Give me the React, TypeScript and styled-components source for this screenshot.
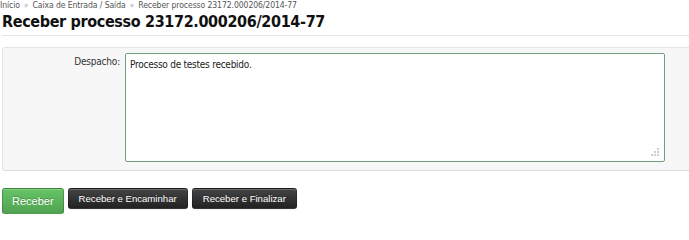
import React from 'react';
import styled, { createGlobalStyle } from 'styled-components';

const GlobalStyle = createGlobalStyle`
  html, body {
    margin: 0;
    padding: 0;
    background: #ffffff;
  }
  body {
    font-family: 'DejaVu Sans Condensed', 'DejaVu Sans', sans-serif;
    font-size: 10px;
    letter-spacing: -0.2px;
    color: #333333;
  }
`;

const Page = styled.div`
  width: 689px;
  padding: 0 0 0 2px;
  box-sizing: border-box;
`;

const Breadcrumb = styled.div`
  display: flex;
  align-items: center;
  gap: 4px;
  height: 11px;
  margin-left: -2px;
  font-size: 8.6px;
  line-height: 11px;
  letter-spacing: -0.1px;
  color: #555555;
`;

const Separator = styled.span`
  color: #aaaaaa;
`;

const Title = styled.h1`
  margin: 1px -2px 0 0;
  font-size: 16px;
  line-height: 20px;
  font-weight: bold;
  letter-spacing: -0.35px;
  color: #111111;
  padding-bottom: 3px;
  border-bottom: 1px solid #e5e5e5;
`;

const FormPanel = styled.div`
  margin-top: 11px;
  margin-right: -4px;
  display: flex;
  align-items: flex-start;
  padding: 5px 27px 8px 0;
  background: #f7f7f7;
  border: 1px solid #e5e5e5;
  border-bottom-color: #dddddd;
  border-radius: 3px;
`;

const Label = styled.label`
  width: 117px;
  flex: none;
  text-align: right;
  padding-top: 3px;
  color: #333333;
`;

const Field = styled.div`
  flex: 1;
  margin-left: 5px;
  position: relative;
`;

const TextArea = styled.textarea`
  display: block;
  width: 100%;
  height: 109px;
  box-sizing: border-box;
  margin: 0;
  padding: 3px 4px;
  resize: none;
  font-family: 'DejaVu Sans Condensed', 'DejaVu Sans', sans-serif;
  font-size: 10px;
  letter-spacing: -0.25px;
  line-height: 15px;
  color: #222222;
  background: #ffffff;
  border: 1px solid #6f9f7c;
  border-radius: 2px;
  outline: none;
  caret-color: #000000;
`;

const Grip = styled.svg`
  position: absolute;
  right: 5px;
  bottom: 5px;
  width: 9px;
  height: 9px;
  pointer-events: none;
`;

const Actions = styled.div`
  display: flex;
  align-items: flex-start;
  gap: 4px;
  margin-top: 17px;
`;

const Button = styled.button<{ $variant: 'success' | 'inverse'; $large?: boolean }>`
  font-family: 'Liberation Sans', Arial, sans-serif;
  font-size: ${(p) => (p.$large ? '11px' : '9.6px')};
  letter-spacing: 0;
  height: ${(p) => (p.$large ? '26px' : '21px')};
  padding: 0 ${(p) => (p.$large ? '9px' : '10px')};
  border-radius: 3px;
  cursor: pointer;
  color: #ffffff;
  text-shadow: 0 -1px 0 rgba(0, 0, 0, 0.25);
  border: 1px solid rgba(0, 0, 0, 0.2);
  box-shadow: inset 0 1px 0 rgba(255, 255, 255, 0.2), 0 1px 2px rgba(0, 0, 0, 0.05);
  background: ${(p) =>
    p.$variant === 'success'
      ? 'linear-gradient(to bottom, #66c466, #51a351)'
      : 'linear-gradient(to bottom, #444444, #222222)'};
`;

const gripDots = [
  [6, 0],
  [3, 3],
  [6, 3],
  [0, 6],
  [3, 6],
  [6, 6],
];

export default function App() {
  return (
    <>
      <GlobalStyle />
      <Page>
        <Breadcrumb>
          <span>Início</span>
          <Separator>»</Separator>
          <span>Caixa de Entrada / Saída</span>
          <Separator>»</Separator>
          <span>Receber processo 23172.000206/2014-77</span>
        </Breadcrumb>
        <Title>Receber processo 23172.000206/2014-77</Title>
        <FormPanel>
          <Label htmlFor="despacho">Despacho:</Label>
          <Field>
            <TextArea
              id="despacho"
              defaultValue="Processo de testes recebido."
              autoFocus
              onFocus={(e) => {
                const len = e.currentTarget.value.length;
                e.currentTarget.setSelectionRange(len, len);
              }}
            />
            <Grip viewBox="0 0 9 9">
              {gripDots.map(([x, y]) => (
                <rect key={`${x}-${y}`} x={x} y={y} width="2" height="2" fill="#cfcfcf" />
              ))}
            </Grip>
          </Field>
        </FormPanel>
        <Actions>
          <Button $variant="success" $large>
            Receber
          </Button>
          <Button $variant="inverse">Receber e Encaminhar</Button>
          <Button $variant="inverse">Receber e Finalizar</Button>
        </Actions>
      </Page>
    </>
  );
}
